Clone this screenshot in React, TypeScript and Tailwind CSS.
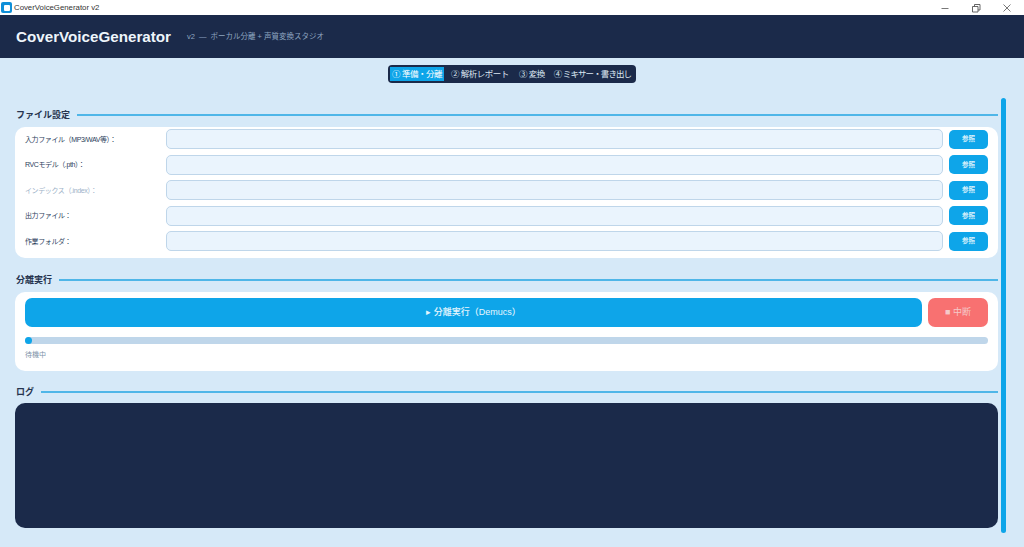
const font = "[font-family:'Liberation_Sans','Noto_Sans_CJK_JP',sans-serif]";

function SectionTitle({ title }: { title: string }) {
  return (
    <div className="flex h-[14px] shrink-0 items-center gap-[7px] pl-[1px]">
      <span className="whitespace-nowrap text-[9px] font-bold leading-none text-[#26344f]">{title}</span>
      <div className="h-[2px] flex-1 bg-[#4fb6e8]" />
    </div>
  );
}

const rows = [
  { label: "入力ファイル（MP3/WAV等）：", muted: false },
  { label: "RVCモデル（.pth）：", muted: false },
  { label: "インデックス（.index）：", muted: true },
  { label: "出力ファイル：", muted: false },
  { label: "作業フォルダ：", muted: false },
];

function FileRow({ label, muted }: { label: string; muted: boolean }) {
  return (
    <div className="flex h-[20px] items-center">
      <span className={`w-[141px] whitespace-nowrap text-[7px] leading-none tracking-[-0.4px] ${muted ? "text-[#9db2c8]" : "text-[#2c3e5c]"}`}>
        {label}
      </span>
      <div className="h-[20px] w-[777px] rounded-[5px] border border-[#bfd6ea] bg-[#eaf4fd]" />
      <button className="ml-[6px] flex h-[19px] w-[39px] items-center justify-center rounded-[5px] bg-[#0ea5e9] text-[6.5px] font-bold text-[#d9f0fb]">
        参照
      </button>
    </div>
  );
}

export default function App() {
  return (
    <div className={`flex h-[547px] w-[1024px] flex-col overflow-hidden bg-[#d6e9f8] ${font}`}>
      <div className="flex h-[15px] shrink-0 items-center justify-between bg-white">
        <div className="flex items-center">
          <div className="ml-[1px] flex h-[11px] w-[11px] items-center justify-center rounded-[2px] bg-[#0f8fd8]">
            <div className="h-[6px] w-[6px] rounded-[1px] bg-white" />
          </div>
          <span className="ml-[2px] text-[7.8px] leading-none text-[#333333]">CoverVoiceGenerator v2</span>
        </div>
        <div className="flex items-center text-[#555555]">
          <svg width="10" height="10" viewBox="0 0 10 10" className="mr-[21px]">
            <path d="M1.5 5.5h7" stroke="currentColor" strokeWidth="0.8" fill="none" />
          </svg>
          <svg width="10" height="10" viewBox="0 0 10 10" className="mr-[21px]">
            <path d="M1.5 3.5h5.500v5.500H1.500zM3.500 3.500V1.500H9v5.500H7" stroke="currentColor" strokeWidth="0.9" fill="none" />
          </svg>
          <svg width="10" height="10" viewBox="0 0 10 10" className="mr-[12px]">
            <path d="M1.500 1.500l7 7M8.500 1.500l-7 7" stroke="currentColor" strokeWidth="0.8" fill="none" />
          </svg>
        </div>
      </div>

      <header className="flex h-[43px] shrink-0 items-center bg-[#1b2a4a] pl-[16px]">
        <span className="w-[171px] whitespace-nowrap text-[15.2px] font-bold leading-none text-[#eef5fb]">CoverVoiceGenerator</span>
        <div className="flex items-center whitespace-nowrap text-[7.5px] leading-none text-[#8fa6c0]">
          <span>v2</span>
          <span className="ml-[4px]">—</span>
          <span className="ml-[4px]">ボーカル分離 + 声質変換スタジオ</span>
        </div>
      </header>

      <nav className="flex shrink-0 justify-center pt-[7px]">
        <div className="flex h-[18px] w-[248px] items-center overflow-hidden rounded-[4px] bg-[#1b2a4a] pl-[2px] text-[8.5px] leading-none tracking-[-0.5px] text-[#dbe7f2]">
          <span className="flex h-[14px] w-[54px] shrink-0 items-center justify-center whitespace-nowrap bg-[#0ea5e9] text-white">① 準備・分離</span>
          <span className="ml-[7px] shrink-0 whitespace-nowrap">② 解析レポート</span>
          <span className="ml-[10px] shrink-0 whitespace-nowrap">③ 変換</span>
          <span className="ml-[9px] shrink-0 whitespace-nowrap tracking-[-0.9px]">④ ミキサー・書き出し</span>
        </div>
      </nav>

      <div className="flex flex-1 pl-[15px]">
        <main className="flex w-[983px] flex-col pt-[25px]">
          <SectionTitle title="ファイル設定" />
          <section className="mt-[5px] flex h-[131px] shrink-0 flex-col justify-between rounded-[10px] bg-white pb-[7px] pl-[10px] pt-[2px]">
            {rows.map((r) => (
              <FileRow key={r.label} label={r.label} muted={r.muted} />
            ))}
          </section>

          <div className="mt-[15px]">
            <SectionTitle title="分離実行" />
          </div>
          <section className="mt-[5px] h-[79px] shrink-0 rounded-[10px] bg-white px-[10px] pt-[6px]">
            <div className="flex gap-[6px]">
              <button className="flex h-[29px] flex-1 items-center justify-center rounded-[7px] bg-[#0ea5e9] text-[9px] font-medium text-[#e6f6fe]">
                ▸ 分離実行（Demucs）
              </button>
              <button className="flex h-[29px] w-[60px] items-center justify-center rounded-[7px] bg-[#f87171] text-[9px] text-[#f5c9c9]">
                ■ 中断
              </button>
            </div>
            <div className="mt-[10px] h-[7px] rounded-full bg-[#bfd6ea]">
              <div className="h-[7px] w-[7px] rounded-full bg-[#0ea5e9]" />
            </div>
            <div className="mt-[7px] text-[7px] leading-none text-[#7d92a8]">待機中</div>
          </section>

          <div className="mt-[14px]">
            <SectionTitle title="ログ" />
          </div>
          <section className="mt-[4px] h-[125px] shrink-0 rounded-[10px] bg-[#1b2a4a]" />
        </main>
        <div className="ml-[3px] mt-[15px] h-[435px] w-[5px] rounded-[3px] bg-[#0ea5e9]" />
      </div>
    </div>
  );
}
